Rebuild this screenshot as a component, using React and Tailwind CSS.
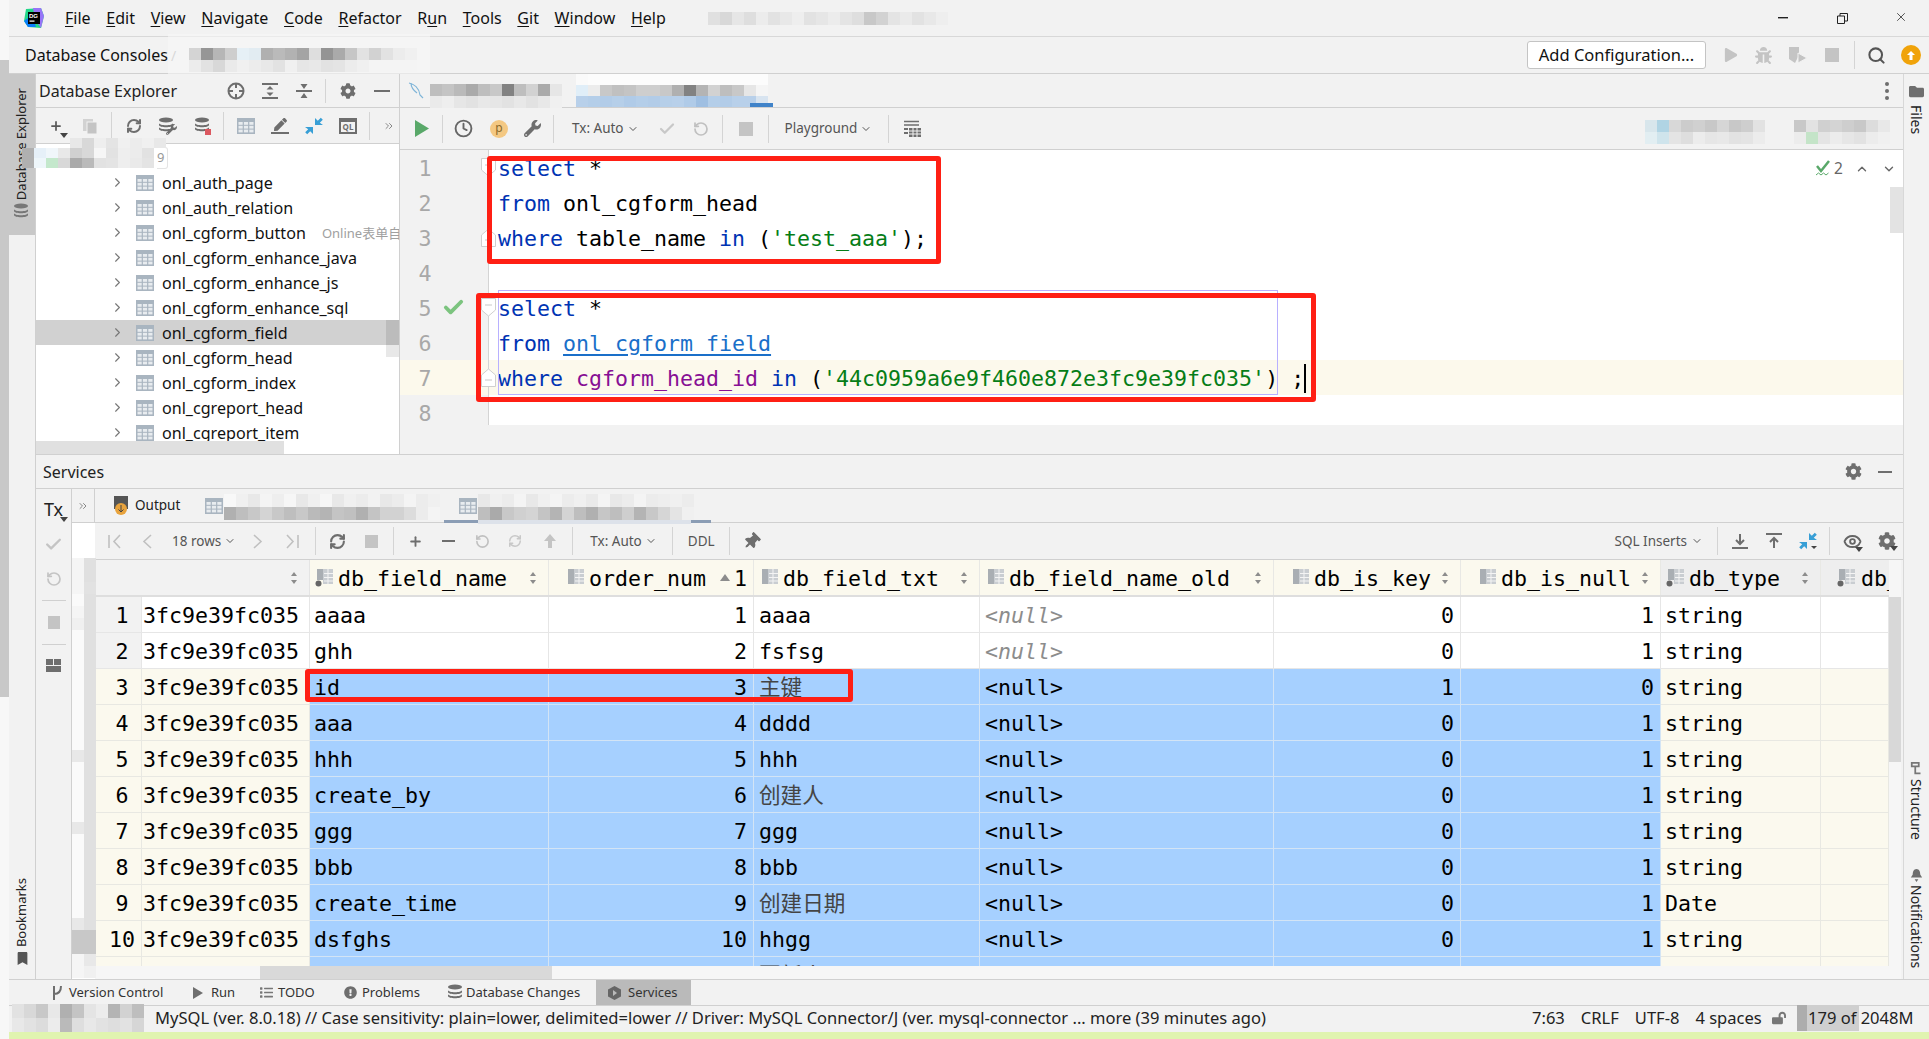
import { Check, ChevronDown, ChevronLeft, ChevronRight, ChevronUp, ChevronsRight, Clock, Eye, Plus, RefreshCw, RotateCcw, Search, X } from "lucide-react";
import { FaBookmark, FaBug, FaCog, FaExclamationCircle, FaFolder, FaList, FaLockOpen, FaPen, FaPlay, FaThumbtack, FaWrench } from "react-icons/fa";

const mono = "font-['DejaVu_Sans_Mono','Noto_Sans_CJK_SC',monospace]";

// redaction patches in the screenshot: a grid of grey values
function Mosaic({ className = "", cell = 12, height = 12, rows }) {
  return (
    <div className={`flex flex-col ${className}`}>
      {rows.map((row, i) => (
        <div key={i} className="flex">
          {row.map((c, j) => (
            <div key={j} style={{ width: cell, height, background: typeof c === "number" ? `rgb(${c},${c},${c})` : c }} />
          ))}
        </div>
      ))}
    </div>
  );
}

const Sep = ({ className = "", h = "h-[28px]" }) => <div className={`w-px ${h} bg-[#d4d4d4] shrink-0 ${className}`} />;

const Svg = ({ w = 16, h = 16, vb = "0 0 16 16", className = "", children }) => (
  <svg width={w} height={h} viewBox={vb} fill="none" className={`shrink-0 ${className}`}>
    {children}
  </svg>
);

const TableIcon = ({ className = "" }) => (
  <Svg w={18} h={16} vb="0 0 18 16" className={className}>
    <rect x="0" y="0" width="18" height="16" fill="#a9b5c0" />
    <rect x="1.5" y="4" width="4.2" height="2.8" fill="#e8ecef" />
    <rect x="6.9" y="4" width="4.2" height="2.8" fill="#e8ecef" />
    <rect x="12.3" y="4" width="4.2" height="2.8" fill="#e8ecef" />
    <rect x="1.5" y="7.8" width="4.2" height="2.8" fill="#e8ecef" />
    <rect x="6.9" y="7.8" width="4.2" height="2.8" fill="#e8ecef" />
    <rect x="12.3" y="7.8" width="4.2" height="2.8" fill="#e8ecef" />
    <rect x="1.5" y="11.6" width="4.2" height="2.8" fill="#e8ecef" />
    <rect x="6.9" y="11.6" width="4.2" height="2.8" fill="#e8ecef" />
    <rect x="12.3" y="11.6" width="4.2" height="2.8" fill="#e8ecef" />
  </Svg>
);

const ColIcon = ({ dot, className = "" }) => (
  <Svg w={19} h={19} vb="0 0 19 19" className={className}>
    <rect x="2" y="1" width="6" height={dot ? 11 : 15} fill="#a9aeb3" />
    <rect x="8" y="1" width="10" height="15" fill="#c9cdd1" />
    <path d="M9 5.5h9M9 9.5h9M9 13h9M13 1v15" stroke="#f4f4f4" strokeWidth="1" />
    {dot && <circle cx="3.5" cy="15.5" r="3" fill="#666" />}
  </Svg>
);

const DbStack = ({ className = "", children, color = "#6e6e6e" }) => (
  <Svg w={18} h={18} vb="0 0 18 18" className={className}>
    <ellipse cx="8" cy="3" rx="7" ry="2.5" fill={color} />
    <path d="M1 6c0 3 14 3 14 0v2c0 3-14 3-14 0zM1 10c0 3 14 3 14 0v2c0 3-14 3-14 0z" fill={color} />
    {children}
  </Svg>
);

const BlueArrows = ({ className = "", caret }) => (
  <Svg w={18} h={18} vb="0 0 18 18" className={className}>
    <path d="M10 8V1l2.8 2.8L15.8.8l2 2-3 3L18 8z" fill="#389fd6" />
    <path d="M8 10v7l-2.8-2.8-3 3-2-2 3-3L0 10z" fill="#389fd6" />
    {caret && <path d="M12 14h6l-3 3z" fill="#444" />}
  </Svg>
);

const Caret = ({ className = "" }) => <Svg w={8} h={5} vb="0 0 8 5" className={className}><path d="M0 0h8L4 5z" fill="#444" /></Svg>;

const SortArrows = ({ className = "" }) => (
  <Svg w={8} h={14} vb="0 0 8 14" className={className}>
    <path d="M4 1l3 4H1zM4 13L1 9h6z" fill="#8c8c8c" />
  </Svg>
);

const Fold = ({ flip, className = "" }) => (
  <Svg w={15} h={19} vb="0 0 15 19" className={className}>
    <path d={flip ? "M.5 18.5V7l7-6 7 6v11.5z" : "M.5.5h14V12l-7 6-7-6z"} fill="#fff" stroke="#cfcfcf" />
    <path d={flip ? "M4 12h7" : "M4 7h7"} stroke="#c8c8c8" />
  </Svg>
);

function Underlined({ first, rest, pre = "" }) {
  return (
    <span>
      {pre}
      <span className="underline underline-offset-2">{first}</span>
      {rest}
    </span>
  );
}

const menu = [
  ["", "F", "ile"], ["", "E", "dit"], ["", "V", "iew"], ["", "N", "avigate"], ["", "C", "ode"], ["", "R", "efactor"],
  ["R", "u", "n"], ["", "T", "ools"], ["", "G", "it"], ["", "W", "indow"], ["", "H", "elp"],
];

function TitleBar() {
  return (
    <div className="h-[37px] border-b border-[#d8d8d8] flex items-center shrink-0 relative text-[#111] text-[16px]">
      <Svg w={20} h={20} vb="0 0 20 20" className="ml-[15px]">
        <path d="M2 1l15 -1 3 8-3 12-13-1-4-6z" fill="#21d789" />
        <path d="M9 0l8 0 3 8-3 12-6-8z" fill="#9775f8" />
        <path d="M0 13l4 6 8 0-4-12z" fill="#087cfa" />
        <rect x="4" y="4" width="12" height="12" fill="#000" />
        <rect x="5.5" y="12.5" width="5" height="1.2" fill="#fff" />
        <text x="5" y="10" fontSize="6" fill="#fff" fontWeight="700" fontFamily="Liberation Sans">DG</text>
      </Svg>
      <div className="flex items-center ml-[21px] gap-[15.7px]">
        {menu.map(([p, f, r]) => (
          <Underlined key={f + r} pre={p} first={f} rest={r} />
        ))}
      </div>
      <svg width="10" height="2" className="absolute left-[1769px] top-[17px]"><rect width="10" height="1.4" fill="#222" /></svg>
      <svg width="11" height="11" viewBox="0 0 11 11" fill="none" className="absolute left-[1828px] top-[13px]"><path d="M.5 3h7v7.5h-7zM3 3V.5h7.5V8H8" stroke="#222" /></svg>
      <X size={14} strokeWidth={1.3} color="#222" className="absolute left-[1885px] top-[10px]" />
    </div>
  );
}

function NavBar() {
  return (
    <div className="h-[37px] border-b border-[#d0d0d0] flex items-center shrink-0 text-[#111]">
      <span className="ml-[16px] text-[16px]">Database Consoles</span>
      <span className="ml-[3px] text-[#aaa] text-[14px]">/</span>
      <div className="ml-auto flex items-center pr-[8px]">
        <div className="w-[179px] h-[28px] bg-white border border-[#c4c4c4] rounded-[3px] flex items-center justify-center text-[16.5px]">Add Configuration...</div>
        <FaPlay size={14} color="#c4c4c4" className="ml-[18px]" />
        <FaBug size={17} color="#c4c4c4" className="ml-[17px]" />
        <Svg w={20} h={18} vb="0 0 20 18" className="ml-[16px]"><path d="M1 1h10v8l-4 8-6-4z" fill="#c4c4c4" /><path d="M10 7l9 5-9 5z" fill="#c4c4c4" stroke="#f2f2f2" /></Svg>
        <div className="ml-[17px] w-[14px] h-[14px] bg-[#c4c4c4]" />
        <Sep className="ml-[15px]" />
        <Search size={19} strokeWidth={2.6} color="#555" className="ml-[12px]" />
        <div className="ml-[15px] w-[20px] h-[20px] rounded-full bg-[#f0a30a] flex items-center justify-center">
          <Svg w={10} h={11} vb="0 0 10 11"><path d="M5 1l4 4H6.5v5h-3V5H1z" fill="#fff" /></Svg>
        </div>
      </div>
    </div>
  );
}

const treeItems = [
  "onl_auth_page", "onl_auth_relation", "onl_cgform_button", "onl_cgform_enhance_java", "onl_cgform_enhance_js",
  "onl_cgform_enhance_sql", "onl_cgform_field", "onl_cgform_head", "onl_cgform_index", "onl_cgreport_head", "onl_cgreport_item", "onl_cgreport_param",
];

function Explorer() {
  return (
    <div className="w-[364px] border-r border-[#d0d0d0] flex flex-col shrink-0 relative overflow-hidden">
      <div className="h-[34px] border-b border-[#d0d0d0] flex items-center justify-between pr-[9px] shrink-0">
        <span className="ml-[3px] text-[16px] text-[#222]">Database Explorer</span>
        <div className="flex items-center">
          <Svg w={18} h={18} vb="0 0 18 18"><circle cx="9" cy="9" r="7.5" stroke="#6e6e6e" strokeWidth="2" /><path d="M9 2v4M9 12v4M2 9h4M12 9h4" stroke="#6e6e6e" strokeWidth="2" /></Svg>
          <Svg className="ml-[17px]"><path d="M0 1h16M0 15h16" stroke="#6e6e6e" strokeWidth="2" /><path d="M8 3l3.5 3.5h-7zM8 13l-3.5-3.5h7z" fill="#6e6e6e" /></Svg>
          <Svg className="ml-[18px]"><path d="M0 8h16" stroke="#6e6e6e" strokeWidth="2" /><path d="M8 6L4.5 1h7zM8 10l3.5 5h-7z" fill="#6e6e6e" /></Svg>
          <Sep className="ml-[13px]" h="h-[24px]" />
          <FaCog size={16} color="#6e6e6e" className="ml-[14px]" />
          <div className="ml-[18px] w-[16px] h-[2px] bg-[#6e6e6e]" />
        </div>
      </div>
      <div className="h-[36px] border-b border-[#d0d0d0] flex items-center shrink-0">
        <div className="relative ml-[13px]">
          <Plus size={14} strokeWidth={3} color="#5a5a5a" />
          <Caret className="absolute left-[11px] top-[14px]" />
        </div>
        <Svg className="ml-[19px]"><rect x="1" y="1" width="10" height="12" fill="#d2d2d2" /><rect x="5" y="4" width="10" height="12" fill="#c4c4c4" stroke="#f2f2f2" /></Svg>
        <Sep className="ml-[13px]" />
        <RefreshCw size={16} strokeWidth={3} color="#6e6e6e" className="ml-[14px]" />
        <div className="relative ml-[16px] w-[19px] h-[18px]">
          <DbStack />
          <FaWrench size={11} color="#6e6e6e" className="absolute left-[8px] top-[7px]" />
        </div>
        <DbStack className="ml-[17px]"><rect x="11" y="12" width="6" height="6" fill="#db5860" /></DbStack>
        <Sep className="ml-[11px]" />
        <TableIcon className="ml-[13px]" />
        <div className="ml-[16px] w-[18px] flex flex-col items-center">
          <FaPen size={13} color="#6e6e6e" />
          <div className="w-[18px] h-[2px] mt-[1px] bg-[#6e6e6e]" />
        </div>
        <BlueArrows className="ml-[16px]" />
        <div className="ml-[16px] w-[18px] h-[16px] border-2 border-t-4 border-[#6e6e6e] text-[8px] leading-[9px] font-bold text-[#6e6e6e] text-center">QL</div>
        <Sep className="ml-[12px]" />
        <ChevronsRight size={12} color="#888" className="ml-[13px]" />
      </div>
      <div className="flex-1 bg-white pt-[1px] overflow-hidden">
        <div className="h-[25px] flex items-center">
          <div className="ml-[121px] w-[11px] h-[22px] border-r border-y border-[#e4e4e4] rounded-r-[3px] text-[13px] text-[#999] flex items-center">9</div>
        </div>
        {treeItems.map((name) => (
          <div key={name} className={`h-[25px] pt-[2px] flex items-center pl-[74px] text-[16.1px] text-[#111] whitespace-nowrap ${name === "onl_cgform_field" ? "bg-[#d1d1d1]" : ""}`}>
            <ChevronRight size={15} strokeWidth={1.8} color="#777" className="shrink-0 -mt-[2px]" />
            <TableIcon className="ml-[11px] -mt-[2px]" />
            <span className="ml-[8px]">{name}</span>
            {name === "onl_cgform_button" && <span className="ml-[16px] text-[13px] text-[#a0a0a0]">Online表单自定义</span>}
          </div>
        ))}
      </div>
      <div className="absolute right-0 top-[246px] w-[13px] h-[37px] flex flex-col">
        <div className="h-[25px] bg-[#bcbcbc]" />
        <div className="h-[12px] bg-[#e8e8e8]" />
      </div>
      <div className="absolute left-0 top-[367px] w-[248px] h-[13px] bg-[#e0e0e0]" />
    </div>
  );
}

const Kw = ({ children }) => <span className="text-[#0033b3]">{children}</span>;
const Str = ({ children }) => <span className="text-[#067d17]">{children}</span>;

const codeLines = [
  <><Kw>select</Kw> *</>,
  <><Kw>from</Kw> onl_cgform_head</>,
  <><Kw>where</Kw> table_name <Kw>in</Kw> (<Str>'test_aaa'</Str>);</>,
  null,
  <><Kw>select</Kw> *</>,
  <><Kw>from</Kw> <span className="text-[#1a6fc9] underline underline-offset-[3px]">onl_cgform_field</span></>,
  <><Kw>where</Kw> <span className="text-[#871094]">cgform_head_id</span> <Kw>in</Kw> (<Str>'44c0959a6e9f460e872e3fc9e39fc035'</Str>) ;<span className="inline-block w-[2px] h-[29px] bg-black align-middle -translate-y-[1px]" /></>,
  null,
];

function Editor() {
  return (
    <div className="flex-1 min-w-0 flex flex-col">
      <div className="h-[34px] border-b border-[#d0d0d0] flex items-center justify-between shrink-0 pr-[14px]">
        <Svg w={18} h={17} vb="0 0 18 17" className="ml-[8px]"><path d="M1 1c5 1 10 5 11 12l3 3M3 1c0 4 2 7 6 10" stroke="#7fb5d8" strokeWidth="1.2" /></Svg>
        <div className="flex flex-col gap-[3px]">
          <div className="w-[4px] h-[4px] rounded-full bg-[#6e6e6e]" />
          <div className="w-[4px] h-[4px] rounded-full bg-[#6e6e6e]" />
          <div className="w-[4px] h-[4px] rounded-full bg-[#6e6e6e]" />
        </div>
      </div>
      <div className="h-[42px] border-b border-[#d0d0d0] flex items-center shrink-0 text-[13.5px] text-[#555]">
        <Svg w={14} h={17} vb="0 0 14 17" className="ml-[15px]"><path d="M0 0l14 8.5L0 17z" fill="#59a869" /></Svg>
        <Sep className="ml-[13px]" />
        <Clock size={19} strokeWidth={2.4} color="#666" className="ml-[11px]" />
        <div className="ml-[17px] w-[18px] h-[18px] rounded-full bg-[#f4c882] text-[12px] leading-[16px] text-center text-[#8a6a2a]">p</div>
        <FaWrench size={17} color="#6e6e6e" className="ml-[16px]" />
        <Sep className="ml-[12px]" />
        <span className="ml-[18px]">Tx: Auto</span>
        <ChevronDown size={12} className="ml-[3px]" />
        <Check size={18} strokeWidth={3} color="#c8c8c8" className="ml-[19px]" />
        <RotateCcw size={16} strokeWidth={2.6} color="#c0c0c0" className="ml-[17px]" />
        <Sep className="ml-[13px]" />
        <div className="ml-[16px] w-[14px] h-[14px] bg-[#c4c4c4]" />
        <Sep className="ml-[15px]" />
        <span className="ml-[16px]">Playground</span>
        <ChevronDown size={12} className="ml-[3px]" />
        <Sep className="ml-[16px]" />
        <Svg w={18} h={17} vb="0 0 18 17" className="ml-[14px]"><path d="M1 1.5h15M1 5h15" stroke="#6e6e6e" strokeWidth="1.6" /><rect x="1" y="8" width="4" height="2" fill="#6e6e6e" /><rect x="1" y="12" width="4" height="2" fill="#6e6e6e" /><rect x="6" y="8" width="12" height="9" fill="#6e6e6e" /><path d="M6 11h12M6 14h12M10 8v9M14 8v9" stroke="#f2f2f2" /></Svg>
      </div>
      <div className={`h-[275px] bg-white overflow-hidden relative shrink-0 ${mono} text-[21.6px] text-black`}>
        {codeLines.map((code, i) => (
          <div key={i} className={`h-[35px] flex items-center whitespace-pre ${i === 6 ? "bg-[#fcf9ec]" : ""}`}>
            <div className={`w-[89px] h-full flex items-center border-r border-[#d4d4d4] shrink-0 relative ${i === 6 ? "" : "bg-[#f2f2f2]"}`}>
              <span className="w-[50px] pt-[3px] text-center text-[#a8a8a8]">{i + 1}</span>
              {i === 4 && <Check size={23} strokeWidth={4} color="#7cc47f" className="-ml-[8px]" />}
              {i === 0 && <Fold className="absolute left-[81px] top-[8px]" />}
              {i === 2 && <Fold flip className="absolute left-[81px] top-[8px]" />}
              {i === 4 && <Fold className="absolute left-[81px] top-[8px]" />}
              {i === 6 && <Fold flip className="absolute left-[81px] top-[8px]" />}
            </div>
            <div className="pl-[9px] pt-[3px]">{code}</div>
          </div>
        ))}
        <div className="absolute left-[1416px] top-[7px] flex items-center font-['Noto_Sans'] text-[#666] text-[15.5px]">
          <Svg w={15} h={18} vb="0 0 15 18"><path d="M1 6l4 5 8-10" stroke="#59a869" strokeWidth="2.5" /><path d="M0 15l2.5-2 2.5 2 2.5-2 2.5 2 2.5-2" stroke="#59a869" /></Svg>
          <span className="ml-[3px]">2</span>
          <ChevronUp size={14} strokeWidth={2.4} className="ml-[12px]" />
          <ChevronDown size={14} strokeWidth={2.4} className="ml-[13px]" />
        </div>
        <div className="absolute right-0 top-[37px] w-[13px] h-[46px] bg-[#e3e3e3]" />
      </div>
    </div>
  );
}

const columns = [
  { name: "db_field_name", w: "w-[239px]", head: "pl-[5px] bg-[#fbf9ee]", dot: true },
  { name: "order_num", w: "w-[205px]", head: "pl-[17px] bg-[#fbf9ee]", sorted: true },
  { name: "db_field_txt", w: "w-[226px]", head: "pl-[6px] bg-[#fbf9ee]" },
  { name: "db_field_name_old", w: "w-[294px]", head: "pl-[6px] bg-[#fbf9ee]" },
  { name: "db_is_key", w: "w-[187px]", head: "pl-[17px] bg-[#fbf9ee]" },
  { name: "db_is_null", w: "w-[200px]", head: "pl-[17px] bg-[#fbf9ee]" },
  { name: "db_type", w: "w-[160px]", head: "pl-[5px] bg-[#eeeeee]", dot: true },
];

const rows = [
  ["aaaa", 1, "aaaa", 0, 1, "string"],
  ["ghh", 2, "fsfsg", 0, 1, "string"],
  ["id", 3, "主键", 1, 0, "string"],
  ["aaa", 4, "dddd", 0, 1, "string"],
  ["hhh", 5, "hhh", 0, 1, "string"],
  ["create_by", 6, "创建人", 0, 1, "string"],
  ["ggg", 7, "ggg", 0, 1, "string"],
  ["bbb", 8, "bbb", 0, 1, "string"],
  ["create_time", 9, "创建日期", 0, 1, "Date"],
  ["dsfghs", 10, "hhgg", 0, 1, "string"],
  ["", "", "更新人", "", "", ""],
];

function DataRow({ n, row }) {
  const sel = n >= 3;
  const line = sel ? "border-[#d3e4f5]" : "border-[#e6e6e6]";
  const main = `${sel ? "bg-[#a6d0ff]" : "bg-white"} ${line} pt-[4px] border-r border-b h-full flex items-center shrink-0 overflow-hidden`;
  const side = `${sel ? "bg-[#fbf9ee] border-[#e8e8e2]" : "bg-white border-[#e6e6e6]"} pt-[4px] border-r border-b h-full flex items-center shrink-0`;
  const [field, order, txt, key, isNull, type] = row;
  return (
    <div className="h-[36px] flex shrink-0">
      <div className={`w-[47px] pl-[8px] pt-[4px] h-full flex items-center justify-center border-r border-b shrink-0 ${sel ? "bg-[#fbf9ee] border-[#e8e8e2]" : "bg-[#f2f2f2] border-[#e6e6e6]"}`}>{n <= 10 ? n : ""}</div>
      <div className={`w-[168px] pl-[1px] ${side}`}>{n <= 10 ? "3fc9e39fc035" : ""}</div>
      <div className={`w-[239px] pl-[4px] ${main}`}>{field}</div>
      <div className={`w-[205px] pr-[6px] justify-end ${main}`}>{order}</div>
      <div className={`w-[226px] pl-[5px] ${main} ${/[^a-z]/.test(txt) ? "text-[#444]" : ""}`}>{txt}</div>
      <div className={`w-[294px] pl-[5px] ${main}`}>
        {n > 10 ? "" : sel ? "<null>" : <span className="italic text-[#8c8c8c]">&lt;null&gt;</span>}
      </div>
      <div className={`w-[187px] pr-[6px] justify-end ${main}`}>{key}</div>
      <div className={`w-[200px] pr-[6px] justify-end ${main}`}>{isNull}</div>
      <div className={`w-[160px] pl-[4px] ${side}`}>{type}</div>
      <div className={`w-[68px] ${side}`} />
    </div>
  );
}

function ResultTable() {
  return (
    <div className={`w-[1794px] shrink-0 ${mono} text-[21.6px] text-black`}>
      <div className="h-[37px] flex border-b-2 border-[#dedede]">
        <div className="w-[215px] bg-[#f2f2f2] border-r border-[#e4e4e4] flex items-center justify-end pr-[11px]"><SortArrows /></div>
        {columns.map((c) => (
          <div key={c.name} className={`${c.w} ${c.head} shrink-0 border-r border-[#e8e8e4] flex items-center`}>
            <ColIcon dot={c.dot} className="mr-[4px]" />
            <span className="whitespace-pre pt-[4px]">{c.name}</span>
            {c.sorted ? (
              <div className="ml-auto flex items-center pr-[6px]">
                <Svg w={10} h={7} vb="0 0 10 7"><path d="M5 0l5 7H0z" fill="#8c8c8c" /></Svg>
                <span className="ml-[4px] pt-[4px]">1</span>
              </div>
            ) : (
              <SortArrows className="ml-auto mr-[11px]" />
            )}
          </div>
        ))}
        <div className="w-[68px] bg-[#eeeeee] pl-[16px] flex items-center overflow-hidden">
          <ColIcon dot className="mr-[5px]" />
          <span className="pt-[4px]">db_</span>
        </div>
      </div>
      <div className="h-[369px] flex flex-col overflow-hidden">
        {rows.map((row, i) => (
          <DataRow key={i} n={i + 1} row={row} />
        ))}
      </div>
      <div className="h-[13px] bg-[#f6f6f6] flex">
        <div className="ml-[165px] w-[292px] bg-[#d9d9d9]" />
      </div>
    </div>
  );
}

function Services() {
  return (
    <div className="flex-1 min-h-0 flex flex-col">
      <div className="h-[34px] border-b border-[#d0d0d0] flex items-center justify-between shrink-0 pr-[11px]">
        <span className="ml-[7px] text-[16px] text-[#222]">Services</span>
        <div className="flex items-center">
          <FaCog size={17} color="#6e6e6e" />
          <div className="ml-[16px] w-[14px] h-[2px] bg-[#6e6e6e]" />
        </div>
      </div>
      <div className="flex-1 min-h-0 flex">
        <div className="w-[36px] border-r border-[#d0d0d0] flex flex-col items-center shrink-0 pt-[6px]">
          <div className="relative h-[34px] text-[18px] text-[#222] leading-[28px]">Tx<Caret className="absolute left-[16px] top-[22px]" /></div>
          <Check size={19} strokeWidth={3} color="#c4c4c4" className="mt-[6px]" />
          <RotateCcw size={16} strokeWidth={2.6} color="#c4c4c4" className="mt-[17px]" />
          <div className="mt-[13px] w-[24px] h-px bg-[#d0d0d0]" />
          <div className="mt-[15px] w-[12px] h-[13px] bg-[#c4c4c4]" />
          <div className="mt-[15px] w-[24px] h-px bg-[#d0d0d0]" />
          <div className="mt-[14px] w-[16px] h-[13px] flex flex-wrap gap-[1px]">
            <div className="w-[7px] h-[6px] bg-[#6e6e6e]" /><div className="w-[7px] h-[6px] bg-[#6e6e6e]" /><div className="w-[15px] h-[6px] bg-[#6e6e6e]" />
          </div>
        </div>
        <div className="flex-1 min-w-0 flex flex-col">
          <div className="h-[34px] border-b border-[#d0d0d0] flex items-center shrink-0 relative text-[13.5px] text-[#222]">
            <div className="w-[23px] h-full border-r border-[#d0d0d0] flex items-center justify-center"><ChevronsRight size={12} color="#888" /></div>
            <Svg w={17} h={19} vb="0 0 17 19" className="ml-[18px]"><rect x="1" y="0" width="14" height="13" fill="#555" /><circle cx="8" cy="13" r="6" fill="#e8a33d" /><path d="M8 9v7M5.5 13.5L8 16l2.5-2.5" stroke="#444" /></Svg>
            <span className="ml-[5px]">Output</span>
            <TableIcon className="ml-[25px]" />
            <TableIcon className="ml-[236px]" />
            <ChevronLeft size={14} color="#aaa" className="ml-[204px]" />
            <div className="absolute left-[372px] bottom-[-1px] w-[267px] h-[3px] bg-[#8b9db5]" />
          </div>
          <div className="flex-1 min-h-0 flex">
            <div className="w-[23px] shrink-0 bg-white" />
            <div className="flex-1 min-w-0 flex flex-col">
              <div className="h-[37px] border-b border-[#d0d0d0] flex items-center shrink-0 text-[13.5px] text-[#555]">
                <Svg w={14} h={15} vb="0 0 14 15" className="ml-[13px]"><path d="M1 1v13M12 1L6 7.5l6 6.5" stroke="#c0c0c0" strokeWidth="1.6" /></Svg>
                <Svg w={10} h={15} vb="0 0 10 15" className="ml-[20px]"><path d="M9 1L2 7.5 9 14" stroke="#c0c0c0" strokeWidth="1.6" /></Svg>
                <span className="ml-[20px]">18 rows</span>
                <ChevronDown size={12} className="ml-[3px]" />
                <Svg w={10} h={15} vb="0 0 10 15" className="ml-[17px]"><path d="M1 1l7 6.5L1 14" stroke="#c0c0c0" strokeWidth="1.6" /></Svg>
                <Svg w={14} h={15} vb="0 0 14 15" className="ml-[22px]"><path d="M13 1v13M2 1l6 6.5L2 14" stroke="#c0c0c0" strokeWidth="1.6" /></Svg>
                <Sep className="ml-[16px]" />
                <RefreshCw size={17} strokeWidth={3} color="#6e6e6e" className="ml-[13px]" />
                <div className="ml-[19px] w-[13px] h-[13px] bg-[#c4c4c4]" />
                <Sep className="ml-[15px]" />
                <Plus size={15} strokeWidth={3} color="#6e6e6e" className="ml-[14px]" />
                <div className="ml-[19px] w-[13px] h-[2px] bg-[#6e6e6e]" />
                <RotateCcw size={15} strokeWidth={2.6} color="#c0c0c0" className="ml-[20px]" />
                <RefreshCw size={14} strokeWidth={2.6} color="#c8c8c8" className="ml-[18px]" />
                <Svg w={16} h={16} className="ml-[20px]"><path d="M8 1l6 7h-4v7H6V8H2z" fill="#c4c4c4" /></Svg>
                <Sep className="ml-[14px]" />
                <span className="ml-[17px]">Tx: Auto</span>
                <ChevronDown size={12} className="ml-[3px]" />
                <Sep className="ml-[15px]" />
                <span className="ml-[15px]">DDL</span>
                <Sep className="ml-[14px]" />
                <FaThumbtack size={17} color="#6e6e6e" className="ml-[13px] rotate-45" />
                <div className="ml-auto flex items-center pr-[7px]">
                  <span>SQL Inserts</span>
                  <ChevronDown size={12} className="ml-[4px]" />
                  <Sep className="ml-[14px]" />
                  <Svg className="ml-[14px]"><path d="M8 1v9M4 7l4 4 4-4" stroke="#6e6e6e" strokeWidth="2" /><path d="M0 15h16" stroke="#6e6e6e" strokeWidth="2" /></Svg>
                  <Svg className="ml-[18px]"><path d="M8 15V6M4 9l4-4 4 4" stroke="#6e6e6e" strokeWidth="2" /><path d="M0 1h16" stroke="#6e6e6e" strokeWidth="2" /></Svg>
                  <BlueArrows caret className="ml-[17px]" />
                  <Sep className="ml-[12px]" />
                  <div className="relative ml-[13px]"><Eye size={19} strokeWidth={2.4} color="#666" /><Caret className="absolute left-[12px] top-[15px]" /></div>
                  <div className="relative ml-[16px]"><FaCog size={18} color="#6e6e6e" /><Caret className="absolute left-[12px] top-[14px]" /></div>
                </div>
              </div>
              <div className="flex-1 min-h-0 flex">
                <ResultTable />
                <div className="w-[12px] shrink-0 bg-[#f6f6f6]"><div className="mt-[37px] h-[165px] bg-[#d8d8d8]" /></div>
              </div>
            </div>
          </div>
        </div>
      </div>
    </div>
  );
}

const RedBox = ({ className }) => <div className={`absolute border-[5px] border-[#ff1f14] rounded-[3px] ${className}`} />;

const leftStrip = [
  [245, 224], [245, 224], [245, 226], [250, 224], [245, 224], [240, 224], [250, 224], [250, 224], [250, 224], [250, 224],
  [250, 224], [250, 224], [250, 224], [250, 224], [250, 224], [250, 224], [232, 224], [250, 224], [250, 224], [250, 224],
  [250, 224], [250, 224], [232, 224], [250, 224], [250, 224], [250, 224], [250, 224], [250, 224], [250, 224], [250, 224],
  [232, 224], [200, 200], [200, 200], [245, 232], [245, 240],
];

function Patches() {
  return (
    <>
      <Mosaic className="absolute left-[708px] top-[12px]" height={13} rows={[[224, 216, 230, 222, 236, 226, 232, 238, 226, 230, 236, 228, 222, 200, 210, 228, 234, 226, 232, 238]]} />
      <Mosaic className="absolute left-[168px] top-[34px] opacity-60" cell={262} height={40} rows={[[246]]} />
      <Mosaic className="absolute left-[189px] top-[48px]" height={12} rows={[[212, 150, 182, 206, "#e6f0f6", "#e2ecf2", 176, 186, 178, 164, 222, 148, 170, 198, 226, 210, 226, 236, 240], [236, 226, 216, 234, 240, 236, 232, 226, 240, 230, 232, 226, 228, 236, 240, 244, 244, 244, 244]]} />
      <Mosaic className="absolute left-[430px] top-[84px]" height={12} rows={[[190, 196, 186, 170, 190, 200, 130, 190, 210, 170, 230], [234, 238, 230, 226, 232, 230, 226, 232, 226, 232, 240]]} />
      <Mosaic className="absolute left-[576px] top-[74px]" height={11} rows={[[250, 252, 252, 252, 252, 252, 252, 252, 252, 252, 252, 252, 252, 252, 252, 252], ["#e0eef8", 236, 200, 192, 196, 206, 206, 200, 176, 130, 180, 210, 190, 200, 230, 245]]} />
      <Mosaic className="absolute left-[576px] top-[96px]" height={11} rows={[["#b8d0ea", "#b4cee9", "#b2cce8", "#b6cfe9", "#b0cbe8", "#b4cee9", "#b2cce8", "#b6cfe9", "#b8d0ea", "#b0cbe8", "#9fbfe2", "#b4cee9", "#b2cce8", "#b8d0ea", "#b8d0ea", "#d8e4f0"]]} />
      <div className="absolute left-[750px] top-[103px] w-[23px] h-[4px] bg-[#4083c9]" />
      <Mosaic className="absolute left-[1645px] top-[120px]" height={12} rows={[["#d8e6ec", "#b0d4e4", 216, 204, 208, 200, 214, 200, 206, 226], ["#e2eef2", "#cfe4ec", 228, 222, 236, 230, 232, 226, 228, 236]]} />
      <Mosaic className="absolute left-[1794px] top-[120px]" height={12} rows={[[200, 226, 208, 212, 206, 200, 220, 232], [236, "#c4e4c8", 228, 236, 230, 226, 236, 240]]} />
      <Mosaic className="absolute left-[22px] top-[138px]" height={10} rows={[[0, 0, 0, 0, 232, 216, 238, 228, 240, 236, 240, 232].map((c) => c || "transparent"), [176, "#e6f0f8", "#f0f6fa", 232, 208, 216, 246, 226, 238, 236, 226], [176, "#eef6fa", "#c4e8cc", 216, 170, 186, 226, 228, 238, 234, 228]]} />
      <Mosaic className="absolute left-[224px] top-[494px]" height={13} rows={[[248, 240, 232, 244, 238, 246, 232, 240, 246, 232, 240, 236, 242, 232, 236, 244, 236, 240], [176, 190, 200, 212, 200, 190, 200, 186, 180, 196, 192, 176, 196, 210, 210, 220, 236, 244]]} />
      <Mosaic className="absolute left-[478px] top-[494px]" height={13} rows={[[232, 240, 236, 244, 232, 240, 244, 236, 240, 234, 244, 232, 236, 244, 236, 238, 240, 236], [190, 170, 200, 208, 212, 196, 180, 212, 190, 176, 198, 190, 206, 180, 200, 214, 228, 240]]} />
      <Mosaic className="absolute left-[478px] top-[520px]" height={4} cell={213} rows={[["#dde2ea"]]} />
      <Mosaic className="absolute left-[72px] top-[558px]" height={12} rows={leftStrip} />
      <Mosaic className="absolute left-[12px] top-[1004px]" height={14} rows={[[226, 216, 200, 232, 176, 196, 228, 236, 180, 210, 190], [232, 226, 220, 236, 186, 222, 232, 226, 222, 226, 214]]} />
    </>
  );
}

export default function App() {
  return (
    <div className="relative w-[1929px] h-[1039px] overflow-hidden flex bg-[#f2f2f2] font-['Noto_Sans','Noto_Sans_CJK_SC',sans-serif]">
      <div className="w-[9px] shrink-0 flex flex-col bg-[#f7f7f7]">
        <div className="mt-[60px] h-[637px] bg-[#c8c8c8]" />
      </div>
      <div className="flex-1 min-w-0 flex flex-col">
        <TitleBar />
        <NavBar />
        <div className="h-[905px] flex shrink-0">
          <div className="w-[27px] shrink-0 border-r border-[#d0d0d0] flex flex-col items-center justify-between pb-[14px] text-[13px] text-[#222]">
            <div className="w-full h-[161px] bg-[#c8c8c8] flex flex-col items-center pt-[14px]">
              <span className="[writing-mode:vertical-rl] rotate-180">Database Explorer</span>
              <DbStack className="mt-[3px]" color="#777" />
            </div>
            <div className="flex flex-col items-center">
              <span className="[writing-mode:vertical-rl] rotate-180">Bookmarks</span>
              <FaBookmark size={13} color="#555" className="mt-[5px]" />
            </div>
          </div>
          <div className="w-[1867px] shrink-0 flex flex-col">
            <div className="h-[381px] border-b border-[#d0d0d0] flex shrink-0">
              <Explorer />
              <Editor />
            </div>
            <Services />
          </div>
          <div className="w-[26px] shrink-0 border-l border-[#d8d8d8] flex flex-col items-center pt-[10px] text-[14px] text-[#222]">
            <FaFolder size={15} color="#6e6e6e" />
            <span className="[writing-mode:vertical-rl] mt-[6px]">Files</span>
            <Svg w={14} h={14} className="mt-[628px]"><path d="M2 1h8v4H2zM6 5v8h6" stroke="#777" strokeWidth="2" /></Svg>
            <span className="[writing-mode:vertical-rl] mt-[3px]">Structure</span>
            <Svg w={15} h={15} className="mt-[28px]"><path d="M8 1c3 0 4 3 4 6l2 3H2l2-3c0-3 1-6 4-6zM6 12h4l-2 3z" fill="#6e6e6e" /></Svg>
            <span className="[writing-mode:vertical-rl] mt-[2px]">Notifications</span>
          </div>
        </div>
        <div className="h-[27px] border-t border-b border-[#d0d0d0] flex items-center shrink-0 text-[13px] text-[#333]">
          <Svg w={11} h={16} vb="0 0 11 16" className="ml-[43px]"><path d="M2 1v14M2 9c5 0 7-3 7-8" stroke="#6e6e6e" strokeWidth="2" /></Svg>
          <span className="ml-[6px] w-[96px] whitespace-nowrap">Version Control</span>
          <Svg w={10} h={12} vb="0 0 10 12" className="ml-[28px]"><path d="M0 0l10 6-10 6z" fill="#6e6e6e" /></Svg>
          <span className="ml-[8px] w-[24px]">Run</span>
          <FaList size={13} color="#777" className="ml-[25px]" />
          <span className="ml-[5px] w-[38px]">TODO</span>
          <FaExclamationCircle size={13} color="#6e6e6e" className="ml-[28px]" />
          <span className="ml-[5px] w-[57px]">Problems</span>
          <DbStack className="ml-[28px]" />
          <span className="ml-[1px] w-[115px] whitespace-nowrap">Database Changes</span>
          <div className="ml-[15px] w-[95px] h-full bg-[#bababa] flex items-center pl-[12px]">
            <Svg w={13} h={14} vb="0 0 13 14"><path d="M6.5 0L13 3.5v7L6.5 14 0 10.5v-7z" fill="#666" /><path d="M5 4l4 3-4 3z" fill="#bababa" /></Svg>
            <span className="ml-[7px]">Services</span>
          </div>
        </div>
        <div className="h-[26px] pb-[2px] flex items-center shrink-0 text-[16.55px] text-[#222] relative whitespace-nowrap">
          <span className="ml-[146px]">MySQL (ver. 8.0.18) // Case sensitivity: plain=lower, delimited=lower // Driver: MySQL Connector/J (ver. mysql-connector ... more (39 minutes ago)</span>
          <div className="absolute left-[1523px] flex items-center gap-[16px]">
            <span>7:63</span>
            <span>CRLF</span>
            <span>UTF-8</span>
            <span>4 spaces</span>
          </div>
          <FaLockOpen size={14} color="#777" className="absolute left-[1763px]" />
          <div className="absolute left-[1788px] h-full w-[10px] bg-[#adadad]" />
          <div className="absolute left-[1798px] h-full w-[52px] bg-[#cfcfcf]" />
          <span className="absolute left-[1799px]">179 of 2048M</span>
        </div>
        <div className="flex-1 bg-[#e0f4b0]" />
      </div>
      <Patches />
      <RedBox className="left-[487px] top-[156px] w-[454px] h-[108px]" />
      <div className="absolute left-[498px] top-[290px] w-[780px] h-[105px] border border-[#b8b0ff]" />
      <RedBox className="left-[476px] top-[293px] w-[840px] h-[109px]" />
      <RedBox className="left-[305px] top-[669px] w-[548px] h-[33px]" />
    </div>
  );
}
